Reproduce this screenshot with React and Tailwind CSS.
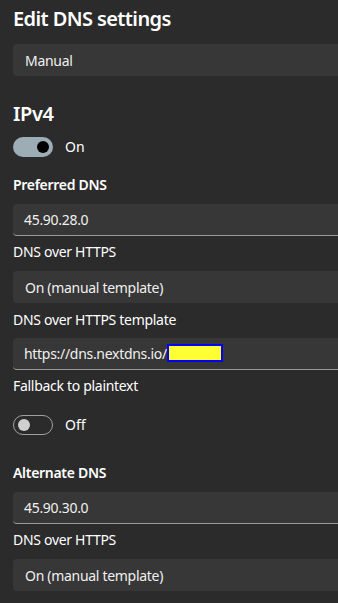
export default function App() {
  return (
    <div
      className="w-[338px] h-[603px] overflow-hidden bg-[#2b2b2b] text-white pl-[13px]"
      style={{ fontFamily: '"Noto Sans", "Open Sans", sans-serif' }}
    >
      <h1 className="text-[20px] font-semibold leading-[28px] pt-[5px] tracking-[-0.6px]">Edit DNS settings</h1>
      <Select className="mt-[11px]">Manual</Select>

      <h2 className="text-[20px] font-semibold leading-[28px] mt-[24px] tracking-[-0.4px]">IPv4</h2>
      <Toggle on className="mt-[9px]" />

      <Label bold className="mt-[18px]">Preferred DNS</Label>
      <TextBox className="mt-[9px]">45.90.28.0</TextBox>
      <Label className="mt-[6px]">DNS over HTTPS</Label>
      <Select className="mt-[9px]">On (manual template)</Select>
      <Label className="mt-[7px]">DNS over HTTPS template</Label>
      <TextBox className="mt-[8px]">
        https://dns.nextdns.io/
        <span className="inline-block w-[56px] h-[18px] bg-[#ffff33] border-2 border-[#0000ff] align-middle -mt-[2px]" />
      </TextBox>
      <Label className="mt-[6px]">Fallback to plaintext</Label>
      <Toggle className="mt-[19px]" />

      <Label bold className="mt-[28px]">Alternate DNS</Label>
      <TextBox className="mt-[9px]">45.90.30.0</TextBox>
      <Label className="mt-[6px]">DNS over HTTPS</Label>
      <Select className="mt-[9px]">On (manual template)</Select>
    </div>
  )
}

function Label({ bold, className, children }) {
  return (
    <div className={`text-[14px] leading-[20px] tracking-[-0.3px] ${bold ? 'font-semibold' : ''} ${className}`}>{children}</div>
  )
}

function Select({ className, children }) {
  return (
    <div className={`w-[325px] h-[32px] rounded-l-[4px] bg-[#373737] flex items-center pl-[12px] text-[14px] tracking-[-0.3px] text-[#f0f0f0] ${className}`}>
      {children}
    </div>
  )
}

function TextBox({ className, children }) {
  return (
    <div className={`w-[325px] h-[32px] rounded-l-[4px] bg-[#373737] border-b border-[#9a9a9a] flex items-center pl-[11px] text-[14px] tracking-[-0.3px] text-[#f0f0f0] ${className}`}>
      {children}
    </div>
  )
}

function Toggle({ on, className }) {
  return (
    <div className={`flex items-center gap-[12px] ${className}`}>
      {on ? (
        <div className="w-[40px] h-[20px] rounded-full bg-[#9dadb6] flex items-center justify-end pr-[4px]">
          <div className="w-[12px] h-[12px] rounded-full bg-black" />
        </div>
      ) : (
        <div className="w-[40px] h-[20px] rounded-full border border-[#a0a0a0] flex items-center pl-[4px]">
          <div className="w-[12px] h-[12px] rounded-full bg-[#d0d0d0]" />
        </div>
      )}
      <span className="text-[14px] leading-[20px]">{on ? 'On' : 'Off'}</span>
    </div>
  )
}
